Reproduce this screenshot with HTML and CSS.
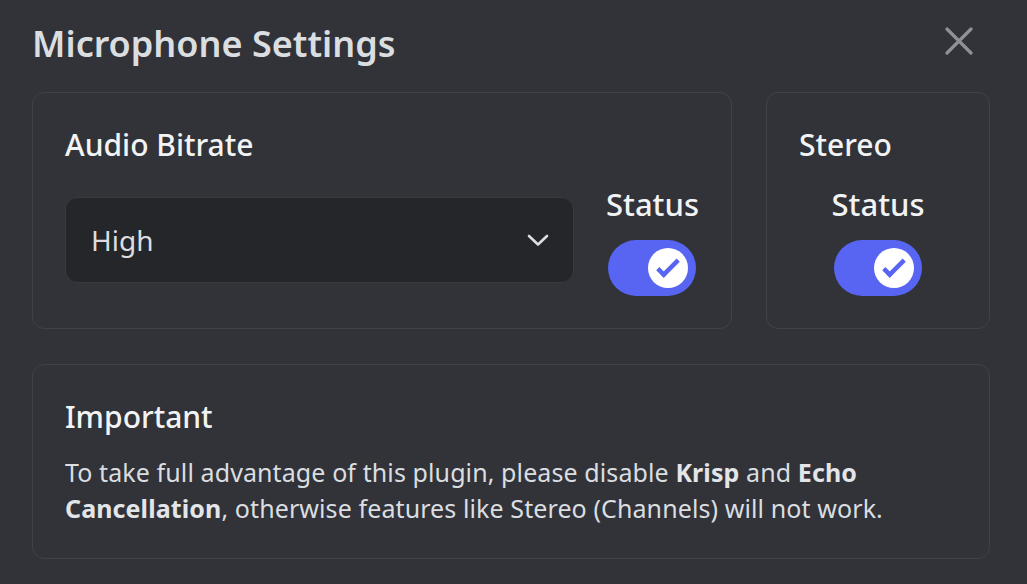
FILE: index.html
```html
<!DOCTYPE html>
<html lang="en">
<head>
<meta charset="utf-8">
<title>Microphone Settings</title>
<link rel="stylesheet" href="styles.css">
</head>
<body>
<div class="modal">
  <header class="header">
    <h1 class="title">Microphone Settings</h1>
    <button class="close" aria-label="Close">
      <svg width="28" height="28" viewBox="0 0 28 28"><path d="M2 2 L26 26 M26 2 L2 26" stroke="currentColor" stroke-width="3.2" stroke-linecap="round" fill="none"/></svg>
    </button>
  </header>
  <div class="grid">
    <section class="card">
      <h2 class="card-title">Audio Bitrate</h2>
      <div class="row">
        <div class="select">
          <span>High</span>
          <svg class="chevron" width="22" height="13" viewBox="0 0 22 13"><path d="M2 2 L11 10.5 L20 2" stroke="currentColor" stroke-width="2.6" fill="none" stroke-linecap="round" stroke-linejoin="round"/></svg>
        </div>
        <div class="status">
          <span class="status-label">Status</span>
          <div class="toggle">
            <div class="knob">
              <svg width="40" height="40" viewBox="0 0 20 20"><path fill="#5865f2" d="M7.89561 14.8538L6.30462 13.2629L14.3099 5.25755L15.9009 6.84854L7.89561 14.8538Z"/><path fill="#5865f2" d="M4.08643 11.0903L5.67742 9.49929L9.4485 13.2704L7.85751 14.8614L4.08643 11.0903Z"/></svg>
            </div>
          </div>
        </div>
      </div>
    </section>
    <section class="card">
      <h2 class="card-title">Stereo</h2>
      <div class="status stereo-status">
        <span class="status-label">Status</span>
        <div class="toggle">
          <div class="knob">
            <svg width="40" height="40" viewBox="0 0 20 20"><path fill="#5865f2" d="M7.89561 14.8538L6.30462 13.2629L14.3099 5.25755L15.9009 6.84854L7.89561 14.8538Z"/><path fill="#5865f2" d="M4.08643 11.0903L5.67742 9.49929L9.4485 13.2704L7.85751 14.8614L4.08643 11.0903Z"/></svg>
          </div>
        </div>
      </div>
    </section>
    <section class="card card-wide">
      <h2 class="card-title">Important</h2>
      <p class="note">To take full advantage of this plugin, please disable <strong>Krisp</strong> and <strong>Echo Cancellation</strong>, otherwise features like Stereo (Channels) will not work.</p>
    </section>
  </div>
</div>
</body>
</html>
```
FILE: styles.css
```css
html, body {
  margin: 0;
  background: #313338;
}

body {
  font-family: "Noto Sans", "Open Sans", sans-serif;
  color: #dbdee1;
}

.modal {
  width: 958px;
  padding: 20px 0 0 32px;
}

.header {
  display: flex;
  align-items: center;
  justify-content: space-between;
  height: 48px;
}

.title {
  margin: 0;
  font-size: 36px;
  font-weight: 600;
  line-height: 48px;
  color: #dbdee1;
}

.close {
  display: flex;
  padding: 0;
  margin: 0 17px 6px 0;
  border: 0;
  background: none;
  color: #8e9196;
}

.grid {
  margin-top: 24px;
  display: grid;
  grid-template-columns: 1fr 224px;
  column-gap: 34px;
  row-gap: 35px;
}

.card {
  border: 1px solid #404249;
  border-radius: 12px;
  padding: 32px;
}

.card-wide {
  grid-column: 1 / -1;
}

.card-title {
  margin: 0;
  font-size: 30px;
  font-weight: 500;
  line-height: 40px;
  color: #f2f3f5;
}

.row {
  display: flex;
  align-items: center;
  gap: 32px;
  margin-top: 19px;
}

.select {
  flex: 1;
  height: 86px;
  box-sizing: border-box;
  display: flex;
  align-items: center;
  justify-content: space-between;
  padding: 0 24px 0 25px;
  background: #252629;
  border: 1px solid #393b40;
  border-radius: 12px;
  font-size: 28px;
  color: #dbdee1;
}

.chevron {
  color: #dbdee1;
}

.status {
  display: flex;
  flex-direction: column;
  align-items: center;
  gap: 16px;
}

.stereo-status {
  margin-top: 19px;
}

.status-label {
  font-size: 31px;
  font-weight: 500;
  line-height: 40px;
  color: #f2f3f5;
}

.toggle {
  box-sizing: border-box;
  width: 88px;
  height: 56px;
  padding: 0 8px;
  border-radius: 28px;
  background: #5865f2;
  display: flex;
  align-items: center;
  justify-content: flex-end;
}

.knob {
  width: 40px;
  height: 40px;
  border-radius: 50%;
  background: #ffffff;
  display: flex;
}

.note {
  margin: 17px 0 0;
  font-size: 25px;
  line-height: 36px;
  letter-spacing: 0.1px;
  color: #dbdee1;
}

.note strong {
  font-weight: 700;
  color: #e3e5e8;
}
```
